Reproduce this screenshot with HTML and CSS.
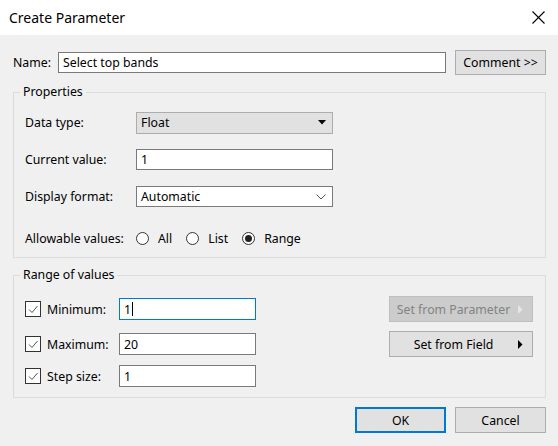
FILE: index.html
```html
<!DOCTYPE html>
<html>
<head>
<meta charset="utf-8">
<title>Create Parameter</title>
<link rel="stylesheet" href="styles.css">
</head>
<body>
<div class="dialog">
  <div class="titlebar">
    <span class="title">Create Parameter</span>
    <svg class="close" width="13" height="13" viewBox="0 0 13 13"><path d="M0.5 0.5 L12.5 12.5 M12.5 0.5 L0.5 12.5" stroke="#000" stroke-width="1.1" fill="none"/></svg>
  </div>
  <div class="content">
    <div class="name-row">
      <span class="name-label">Name:</span>
      <div class="field name-field">Select top bands</div>
      <div class="btn comment-btn">Comment &gt;&gt;</div>
    </div>

    <fieldset class="group props">
      <legend>Properties</legend>
      <div class="prop-row">
        <span class="prop-label">Data type:</span>
        <div class="select">
          <span>Float</span>
          <svg width="8" height="5" viewBox="0 0 8 5"><path d="M0 0 H8 L4 4.5 Z" fill="#000"/></svg>
        </div>
      </div>
      <div class="prop-row">
        <span class="prop-label">Current value:</span>
        <div class="field prop-field">1</div>
      </div>
      <div class="prop-row">
        <span class="prop-label">Display format:</span>
        <div class="field prop-field combo">
          <span>Automatic</span>
          <svg width="10" height="6" viewBox="0 0 10 6"><path d="M0.5 0.5 L5 5 L9.5 0.5" stroke="#555" stroke-width="1" fill="none"/></svg>
        </div>
      </div>
      <div class="prop-row radio-row">
        <span class="prop-label">Allowable values:</span>
        <div class="radios">
          <span class="radio-opt"><span class="radio"></span>All</span>
          <span class="radio-opt"><span class="radio"></span>List</span>
          <span class="radio-opt"><span class="radio checked"></span>Range</span>
        </div>
      </div>
    </fieldset>

    <fieldset class="group range">
      <legend>Range of values</legend>
      <div class="range-body">
        <div class="range-left">
          <div class="range-row">
            <span class="check"><svg width="14" height="14" viewBox="0 0 14 14"><path d="M3 7.5 L6 10.5 L11.5 4" stroke="#555" stroke-width="1" fill="none"/></svg></span>
            <span class="range-label">Minimum:</span>
            <div class="field range-field focused">1<span class="caret"></span></div>
          </div>
          <div class="range-row r2">
            <span class="check"><svg width="14" height="14" viewBox="0 0 14 14"><path d="M3 7.5 L6 10.5 L11.5 4" stroke="#555" stroke-width="1" fill="none"/></svg></span>
            <span class="range-label">Maximum:</span>
            <div class="field range-field">20</div>
          </div>
          <div class="range-row r3">
            <span class="check"><svg width="14" height="14" viewBox="0 0 14 14"><path d="M3 7.5 L6 10.5 L11.5 4" stroke="#555" stroke-width="1" fill="none"/></svg></span>
            <span class="range-label">Step size:</span>
            <div class="field range-field">1</div>
          </div>
        </div>
        <div class="range-right">
          <div class="btn set-btn disabled">
            <span>Set from Parameter</span>
            <svg width="5" height="9" viewBox="0 0 5 9"><path d="M0 0 L4.5 4.5 L0 9 Z" fill="#e6e6e6"/></svg>
          </div>
          <div class="btn set-btn">
            <span>Set from Field</span>
            <svg width="5" height="9" viewBox="0 0 5 9"><path d="M0 0 L4.5 4.5 L0 9 Z" fill="#000"/></svg>
          </div>
        </div>
      </div>
    </fieldset>

    <div class="footer">
      <div class="btn foot-btn ok">OK</div>
      <div class="btn foot-btn">Cancel</div>
    </div>
  </div>
</div>
</body>
</html>
```

FILE: styles.css
```css
* { box-sizing: border-box; }
html, body { margin: 0; padding: 0; }
body {
  width: 558px;
  height: 446px;
  overflow: hidden;
  background: #f0f0f0;
  font-family: "Noto Sans", "Open Sans", sans-serif;
  font-size: 12.3px;
  color: #000;
}
.dialog { width: 558px; height: 446px; display: flex; flex-direction: column; }

.titlebar {
  height: 35px;
  background: #fff;
  display: flex;
  align-items: center;
  justify-content: space-between;
  padding: 0 13px 1px 9px;
}
.title { font-size: 14px; }
.close { display: block; }

.content { padding: 0 12px 0 13px; display: flex; flex-direction: column; }

.name-row { margin-top: 15px; height: 25px; display: flex; align-items: center; }
.name-label { width: 45px; }
.field {
  background: #fff;
  border: 1px solid #7a7a7a;
  height: 21px;
  line-height: 19px;
  padding: 0 4px;
  display: flex;
  align-items: center;
}
.name-field { width: 388px; }
.btn {
  background: #e1e1e1;
  border: 1px solid #adadad;
  height: 25px;
  display: flex;
  align-items: center;
  justify-content: center;
}
.comment-btn { width: 91px; margin-left: 9px; }

.group {
  margin: 9px 0 0;
  border: 1px solid #dcdcdc;
  padding: 12px 11px 8px;
  min-width: 0;
}
.group legend {
  padding: 0 3px;
  margin-left: -5px;
  line-height: 16px;
}

.props { display: flex; flex-direction: column; }
.prop-row { display: flex; align-items: center; height: 21px; margin-bottom: 16px; }
.prop-row.radio-row { margin-top: 5px; margin-bottom: 0; }
.prop-label { width: 111px; flex: none; }
.select {
  width: 197px;
  height: 22px;
  background: #e1e1e1;
  border: 1px solid #adadad;
  display: flex;
  align-items: center;
  justify-content: space-between;
  padding: 0 6px 0 4px;
}
.prop-field { width: 197px; }
.combo { justify-content: space-between; padding-right: 6px; }
.combo svg, .select svg { display: block; }

.radios { display: flex; align-items: center; }
.radio-opt { display: flex; align-items: center; margin-right: 14px; }
.radio {
  width: 13px; height: 13px;
  border: 1px solid #333;
  border-radius: 50%;
  background: #fff;
  margin-right: 9px;
  display: flex; align-items: center; justify-content: center;
}
.radio.checked::after {
  content: "";
  width: 7px; height: 7px;
  border-radius: 50%;
  background: #222;
}

.range { padding-top: 13px; padding-bottom: 10px; }
.range-body { display: flex; justify-content: space-between; align-items: flex-start; }
.range-left { display: flex; flex-direction: column; }
.range-row { display: flex; align-items: center; height: 22px; margin-top: 2px; }
.range-row.r2 { margin-top: 13px; }
.range-row.r3 { margin-top: 10px; }
.check {
  width: 16px; height: 16px;
  border: 1px solid #333;
  background: #fff;
  display: flex; align-items: center; justify-content: center;
}
.check svg { display: block; }
.range-label { width: 72px; margin-left: 6px; }
.range-field { width: 137px; height: 22px; }
.range-field.focused { border-color: #0078d7; }
.caret { display: inline-block; width: 1px; height: 14px; background: #000; margin-left: 1px; }

.range-right { display: flex; flex-direction: column; margin-right: 1px; }
.set-btn {
  width: 144px; height: 26px;
  padding-right: 15px;
  position: relative;
}
.set-btn + .set-btn { margin-top: 9px; }
.set-btn svg { position: absolute; right: 9px; top: 8px; }
.set-btn.disabled { background: #cccccc; border-color: #bfbfbf; color: #838383; }

.footer { display: flex; justify-content: flex-end; margin-top: 9px; }
.foot-btn { width: 91px; height: 26px; margin-left: 9px; }
.foot-btn.ok { border: 2px solid #0078d7; }
```
